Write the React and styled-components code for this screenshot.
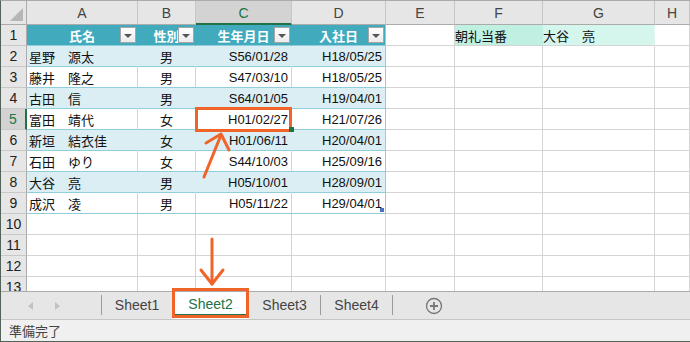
import React from "react"
import styled, { createGlobalStyle } from 'styled-components';

const GlobalStyle = createGlobalStyle`
  html, body {
    margin: 0;
    padding: 0;
    overflow: hidden;
    background: #ffffff;
  }
  body {
    font-family: "Liberation Sans", "Noto Sans CJK JP", sans-serif;
  }
`;

const GREEN = '#217346'
const TEAL = '#41abbd'
const BAND = '#daeef3'
const TLINE = '#92cddc'
const GRID = '#d4d4d4'
const ORANGE = '#f0642a'

const Window = styled.div`
  position: relative;
  width: 690px;
  height: 342px;
  box-sizing: border-box;
  border-top: 1px solid #ababab;
  border-left: 1px solid #52645a;
  border-bottom: 1px solid #52645a;
  display: flex;
  flex-direction: column;
  overflow: hidden;
  background: #fff;
`;

const Sheet = styled.div`
  flex: 1;
  display: flex;
  flex-direction: column;
  overflow: hidden;
`;

const Row = styled.div`
  display: grid;
  grid-template-columns: 26px 111px 58px 96px 94px 69px 88px 112px 1fr;
  height: ${p => p.$h || 21}px;
  flex-shrink: 0;
`;

const Corner = styled.div`
  position: relative;
  background: #e6e6e6;
  border-right: 1px solid #ababab;
  border-bottom: 1px solid #ababab;
  &::after {
    content: '';
    position: absolute;
    right: 3px;
    bottom: 3px;
    border-style: solid;
    border-width: 0 0 13px 13px;
    border-color: transparent transparent #b6b6b6 transparent;
  }
`;

const ColHead = styled.div`
  display: flex;
  align-items: center;
  justify-content: center;
  background: ${p => p.$sel ? '#d3d3d3' : '#e6e6e6'};
  color: ${p => p.$sel ? GREEN : '#444'};
  font-size: 14px;
  border-right: 1px solid #c6c6c6;
  border-bottom: ${p => p.$sel ? `2px solid ${GREEN}` : '1px solid #ababab'};
  padding-top: 1px;
`;

const RowHead = styled.div`
  display: flex;
  align-items: center;
  justify-content: center;
  background: ${p => p.$sel ? '#d3d3d3' : '#e6e6e6'};
  color: ${p => p.$sel ? GREEN : '#222'};
  font-size: 14px;
  border-right: ${p => p.$sel ? `2px solid ${GREEN}` : '1px solid #ababab'};
  border-bottom: 1px solid #c8c8c8;
`;

const Cell = styled.div`
  position: relative;
  display: flex;
  align-items: center;
  justify-content: ${p => p.$align === 'right' ? 'flex-end' : p.$align === 'center' ? 'center' : 'flex-start'};
  padding: 0 ${p => p.$align === 'right' ? '3px' : '0'} 0 ${p => p.$align === 'left' ? '2px' : '0'};
  box-sizing: border-box;
  background: ${p => p.$fill || '#fff'};
  color: ${p => p.$color || '#111'};
  font-size: 13px;
  font-weight: ${p => p.$bold ? 700 : 400};
  white-space: nowrap;
  overflow: visible;
  border-right: 1px solid ${p => p.$vline || GRID};
  border-bottom: 1px solid ${p => p.$hline || GRID};
`;

const FilterButton = styled.span`
  position: absolute;
  right: 1px;
  top: 2px;
  width: 16px;
  height: 16px;
  box-sizing: border-box;
  border: 1px solid #a6a6a6;
  background: linear-gradient(#ffffff, #ececec);
  display: flex;
  align-items: center;
  justify-content: center;
  &::after {
    content: '';
    border-style: solid;
    border-width: 4px 4px 0 4px;
    border-color: #555 transparent transparent transparent;
    margin-top: 1px;
  }
`;

const Handle = styled.span`
  position: absolute;
  right: ${p => p.$inset ? '1px' : '-3px'};
  bottom: ${p => p.$inset ? '1px' : '-3px'};
  width: ${p => p.$inset ? 4 : 5}px;
  height: ${p => p.$inset ? 4 : 5}px;
  background: ${p => p.$color};
  z-index: 2;
`;

const TabBar = styled.div`
  height: 28px;
  box-sizing: border-box;
  border-top: 1px solid #ababab;
  background: #e6e6e6;
  display: flex;
  align-items: stretch;
  flex-shrink: 0;
`;

const Nav = styled.div`
  width: 100px;
  display: flex;
  align-items: center;
  gap: 22px;
  padding-left: 27px;
  box-sizing: border-box;
`;

const NavArrow = styled.span`
  width: 0;
  height: 0;
  border-style: solid;
  border-width: ${p => p.$dir === 'left' ? '4.5px 5px 4.5px 0' : '4.5px 0 4.5px 5px'};
  border-color: ${p => p.$dir === 'left'
    ? 'transparent #c2c2c2 transparent transparent'
    : 'transparent transparent transparent #c2c2c2'};
`;

const Divider = styled.span`
  width: 1px;
  margin: 3px 0 4px;
  background: #9a9a9a;
`;

const Tab = styled.div`
  width: ${p => p.$w}px;
  display: flex;
  align-items: center;
  justify-content: center;
  font-size: 14px;
  color: #444;
  padding-bottom: 1px;
`;

const ActiveTab = styled.div`
  width: 77px;
  background: #fff;
  display: flex;
  padding: 0 3px 3px;
  box-sizing: border-box;
`;

const ActiveLabel = styled.div`
  flex: 1;
  display: flex;
  align-items: center;
  justify-content: center;
  font-size: 14px;
  color: ${GREEN};
  border-bottom: 2px solid ${GREEN};
  padding-top: 2px;
`;

const AddSheet = styled.div`
  margin-left: 32px;
  display: flex;
  align-items: center;
`;

const StatusBar = styled.div`
  height: 22px;
  box-sizing: border-box;
  border-top: 1px solid #c6c6c6;
  background: #f0f0f0;
  display: flex;
  align-items: center;
  padding-left: 8px;
  font-size: 13px;
  color: #444;
  font-family: "Noto Sans CJK JP", sans-serif;
  flex-shrink: 0;
`;

const Overlay = styled.svg`
  position: absolute;
  left: -1px;
  top: -1px;
  pointer-events: none;
`;

const LETTERS = ['A', 'B', 'C', 'D', 'E', 'F', 'G', 'H']
const HEADERS = ['氏名', '性別', '生年月日', '入社日']
const PEOPLE = [
  ['星野　源太', '男', 'S56/01/28', 'H18/05/25'],
  ['藤井　隆之', '男', 'S47/03/10', 'H18/05/25'],
  ['古田　信', '男', 'S64/01/05', 'H19/04/01'],
  ['富田　靖代', '女', 'H01/02/27', 'H21/07/26'],
  ['新垣　結衣佳', '女', 'H01/06/11', 'H20/04/01'],
  ['石田　ゆり', '女', 'S44/10/03', 'H25/09/16'],
  ['大谷　亮', '男', 'H05/10/01', 'H28/09/01'],
  ['成沢　凌', '男', 'H05/11/22', 'H29/04/01'],
]
const ALIGN = ['left', 'center', 'right', 'right']

function EmptyCells({ from }) {
  return LETTERS.slice(from).map(l => <Cell key={l} />)
}

function HeaderRow() {
  return (
    <Row>
      <RowHead>1</RowHead>
      {HEADERS.map((h, i) => (
        <Cell key={h} $align="center" $fill={TEAL} $color="#fff" $bold
          $vline={i === 3 ? TLINE : 'transparent'} $hline={TLINE}>
          {h}
          <FilterButton />
        </Cell>
      ))}
      <Cell />
      <Cell $fill="#bff0e2" $vline="transparent">朝礼当番</Cell>
      <Cell $fill="#d5f6ed" $vline="#e4f5f0">大谷　亮</Cell>
      <Cell />
    </Row>
  )
}

function DataRow({ n, person }) {
  const band = n % 2 === 0
  return (
    <Row>
      <RowHead $sel={n === 5}>{n}</RowHead>
      {person.map((v, i) => (
        <Cell key={i} $align={ALIGN[i]} $fill={band ? BAND : '#fff'} $hline={TLINE}
          $vline={i === 3 ? TLINE : band ? 'transparent' : GRID}>
          {v}
          {n === 5 && i === 2 && <Handle $color={GREEN} />}
          {n === 9 && i === 3 && <Handle $color="#4a6fc0" $inset />}
        </Cell>
      ))}
      <EmptyCells from={4} />
    </Row>
  )
}

function Marks() {
  return (
    <Overlay width="690" height="342" viewBox="0 0 690 342">
      <g fill="none" stroke={ORANGE} strokeWidth="3" strokeLinecap="round" strokeLinejoin="round">
        <rect x="196.5" y="108.5" width="94" height="22" strokeLinecap="butt" strokeLinejoin="miter" />
        <path d="M204 177 L221 135" />
        <path d="M206 143 L221 134 L229 150" />
        <path d="M212 239 L212 284" />
        <path d="M201 270 L212 284 L223 270" />
        <rect x="173.5" y="289.5" width="74" height="27" strokeLinecap="butt" strokeLinejoin="miter" />
      </g>
    </Overlay>
  )
}

export default function App() {
  return (
    <Window>
      <GlobalStyle />
      <Sheet>
        <Row $h={24}>
          <Corner />
          {LETTERS.map(l => <ColHead key={l} $sel={l === 'C'}>{l}</ColHead>)}
        </Row>
        <HeaderRow />
        {PEOPLE.map((p, i) => <DataRow key={i} n={i + 2} person={p} />)}
        {[10, 11, 12, 13].map(n => (
          <Row key={n}>
            <RowHead>{n}</RowHead>
            <EmptyCells from={0} />
          </Row>
        ))}
      </Sheet>
      <TabBar>
        <Nav>
          <NavArrow $dir="left" />
          <NavArrow $dir="right" />
        </Nav>
        <Divider />
        <Tab $w={70}>Sheet1</Tab>
        <ActiveTab><ActiveLabel>Sheet2</ActiveLabel></ActiveTab>
        <Tab $w={71}>Sheet3</Tab>
        <Divider />
        <Tab $w={71}>Sheet4</Tab>
        <Divider />
        <AddSheet>
          <svg width="18" height="18" viewBox="0 0 18 18" fill="none" stroke="#777" strokeWidth="1.3">
            <circle cx="9" cy="9" r="7.5" />
            <path d="M9 5 V13 M5 9 H13" strokeWidth="1.8" />
          </svg>
        </AddSheet>
      </TabBar>
      <StatusBar>準備完了</StatusBar>
      <Marks />
    </Window>
  )
}
